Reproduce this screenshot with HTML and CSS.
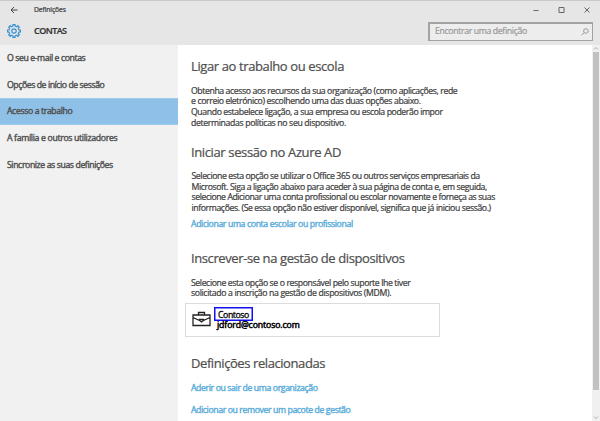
FILE: index.html
```
<!DOCTYPE html>
<html lang="pt">
<head>
<meta charset="utf-8">
<title>Definições</title>
<link rel="stylesheet" href="styles.css">
</head>
<body>
<div class="window">
  <header>
    <div class="titlebar">
      <svg class="back" width="8" height="8" viewBox="0 0 8 8"><path d="M7.500 4H1M4 1L1 4l3 3"/></svg>
      <span class="title">Definições</span>
      <svg class="controls" width="58" height="8" viewBox="0 0 58 8"><path d="M.5 4.500h5M26 1.500h5v5h-5zM51.500 1.500l5 5M56.500 1.500l-5 5"/></svg>
    </div>
    <div class="toolbar">
      <svg class="gear" width="14" height="14" viewBox="0 0 14 14"><path d="M5.900 2L6 .6h2L8.100 2l1.700.7 1-1 1.500 1.500-1 1 .7 1.700 1.400.1v2l-1.400.1-.7 1.700 1 1-1.500 1.500-1-1-1.700.7-.1 1.400H6l-.1-1.400-1.700-.7-1 1-1.500-1.500 1-1L2 8.100.6 8V6L2 5.900l.7-1.700-1-1 1.500-1.500 1 1z"/><circle cx="7" cy="7" r="2.200"/></svg>
      <h1>CONTAS</h1>
      <div class="search"><span>Encontrar uma definição</span><svg width="8" height="8" viewBox="0 0 8 8"><circle cx="4.900" cy="3" r="2.300"/><path d="M3.200 4.700L.6 7.300"/></svg></div>
    </div>
  </header>
  <div class="main">
    <nav>
      <a class="n1">O seu e-mail e contas</a>
      <a class="n2">Opções de início de sessão</a>
      <a class="n3 active">Acesso a trabalho</a>
      <a class="n4">A família e outros utilizadores</a>
      <a class="n5">Sincronize as suas definições</a>
    </nav>
    <section class="content">
      <h2 class="h-work">Ligar ao trabalho ou escola</h2>
      <p class="intro"><span class="t396">Obtenha acesso aos recursos da sua organização (como aplicações, rede</span><span class="t372">e correio eletrónico) escolhendo uma das duas opções abaixo.</span><span class="t384">Quando estabelece ligação, a sua empresa ou escola poderão impor</span><span class="t345">determinadas políticas no seu dispositivo.</span></p>
      <h2 class="h-azure">Iniciar sessão no Azure AD</h2>
      <p class="azure"><span class="t396">Selecione esta opção se utilizar o Office 365 ou outros serviços empresariais da</span><span class="t396">Microsoft. Siga a ligação abaixo para aceder à sua página de conta e, em seguida,</span><span class="t424">selecione Adicionar uma conta profissional ou escolar novamente e forneça as suas</span><span class="t390">informações. (Se essa opção não estiver disponível, significa que já iniciou sessão.)</span></p>
      <a class="link l1">Adicionar uma conta escolar ou profissional</a>
      <h2 class="h-mdm">Inscrever-se na gestão de dispositivos</h2>
      <p class="mdm"><span class="t396">Selecione esta opção se o responsável pelo suporte lhe tiver</span><span class="t345">solicitado a inscrição na gestão de dispositivos (MDM).</span></p>
      <div class="account">
        <svg width="19" height="16" viewBox="0 0 19 16"><path d="M1 4h17v10.500H1zM6.500 4V1.500h6V4M1 6.500l6.500 3M18 6.500l-6.500 3M7.500 8.500h4v1l-2 1.500-2-1.500z"/></svg>
        <div class="who"><span class="org">Contoso</span><span class="mail">jdford@contoso.com</span></div>
      </div>
      <h2 class="h-rel">Definições relacionadas</h2>
      <a class="link l2">Aderir ou sair de uma organização</a>
      <a class="link l3">Adicionar ou remover um pacote de gestão</a>
    </section>
    <div class="scroll">
      <svg width="6" height="7" viewBox="0 0 6 7"><path d="M1 4.500l2-2 2 2"/></svg>
      <div class="thumb"></div>
      <svg width="6" height="7" viewBox="0 0 6 7"><path d="M1 2.500l2 2 2-2"/></svg>
    </div>
  </div>
</div>
</body>
</html>
```
FILE: styles.css
```
* { box-sizing: border-box; }
body { margin: 0; font: 8.7px/10.7px "Open Sans", sans-serif; color: #3d3d3d; white-space: nowrap; overflow: hidden; -webkit-text-stroke: .22px; }
h1, h2, p { margin: 0; }
svg { fill: none; stroke: #444; flex: none; }
.window { height: 421px; width: 600px; display: flex; flex-direction: column; background: #fff; }
header { height: 45px; background: #e6e6e6; border-top: 1px solid #c9c9c9; }
.titlebar { display: flex; align-items: center; height: 17px; padding-left: 10px; }
.title { margin-left: 16px; padding-top: 1px; font-size: 6.8px; font-weight: 500; letter-spacing: -.12px; }
.controls { margin-left: auto; margin-right: 9px; stroke: #666; }
.toolbar { display: flex; align-items: center; height: 26px; padding: 0 7px; }
.gear { stroke: #3790d3; stroke-width: 1.2; }
h1 { margin-left: 13px; font-size: 9px; font-weight: 600; letter-spacing: -.55px; color: #333; }
.search { margin-left: auto; width: 165px; height: 19px; border: 2px solid #a3a3a3; border-width: 2px 1px 1px 2px; background: #ededed; display: flex; align-items: center; justify-content: space-between; padding: 0 3px 0 5px; color: #999; letter-spacing: -.34px; }
.search svg { stroke: #999; }
.main { flex: 1; display: flex; min-height: 0; }
nav { width: 178px; background: #f1f1f1; -webkit-text-stroke: .4px; }
nav a { display: flex; align-items: center; height: 27px; padding: 0 7px 1px; color: #505050; }
nav .active { background: #8fc0e7; border: 1px solid #9fcbea; border-width: 1px 0; height: 27px; margin-top: -1px; }
.n1 { letter-spacing: -.4px; }
.n2 { letter-spacing: -.43px; }
.n3 { letter-spacing: -.375px; }
.n4 { letter-spacing: -.32px; }
.n5 { letter-spacing: -.39px; }
.content { flex: 1; padding: 12px 0 0 13px; display: flex; flex-direction: column; align-items: flex-start; }
h2 { font-size: 13px; line-height: 18px; font-weight: 400; color: #505050; }
p span { display: block; }
.t345 { letter-spacing: -.345px; }
.t372 { letter-spacing: -.372px; }
.t384 { letter-spacing: -.384px; }
.t390 { letter-spacing: -.39px; }
.t396 { letter-spacing: -.398px; }
.t424 { letter-spacing: -.424px; }
.h-work { letter-spacing: -.388px; }
.intro { margin-top: 10.600px; }
.h-azure { margin-top: 14.400px; letter-spacing: -.374px; }
.azure { margin: 10px 0 0 .5px; }
.link { color: #5badda; line-height: 12px; -webkit-text-stroke: .4px; }
.l1 { margin-top: 4px; letter-spacing: -.36px; }
.h-mdm { margin-top: 19px; letter-spacing: -.4px; }
.mdm { margin-top: 11px; }
.account { margin: 4px 0 0 -6px; width: 255px; height: 34px; border: 1px solid #dcdcdc; display: flex; padding: 7px 0 0 6px; }
.account svg { stroke: #222; stroke-width: 1.300; }
.who { margin: -4px 0 0 3px; display: flex; flex-direction: column; align-items: flex-start; color: #000; -webkit-text-stroke: .3px; }
.org { border: 1px solid #1010f0; box-shadow: inset 0 0 0 .5px #1010f0; width: 39px; height: 14px; padding-left: 3px; letter-spacing: -.4px; line-height: 14px; }
.mail { margin: -1px 0 0 3px; letter-spacing: -.1px; -webkit-text-stroke: .5px; }
.h-rel { margin-top: 17px; letter-spacing: -.416px; }
.l2 { margin-top: 10px; letter-spacing: -.37px; }
.l3 { margin-top: 10px; letter-spacing: -.385px; }
.scroll { width: 8px; background: #f0f0f0; padding: 0 1px; display: flex; flex-direction: column; }
.scroll svg { stroke: #999; stroke-width: .8; }
.thumb { height: 338px; background: #c1c1c1; margin-bottom: auto; }
```
